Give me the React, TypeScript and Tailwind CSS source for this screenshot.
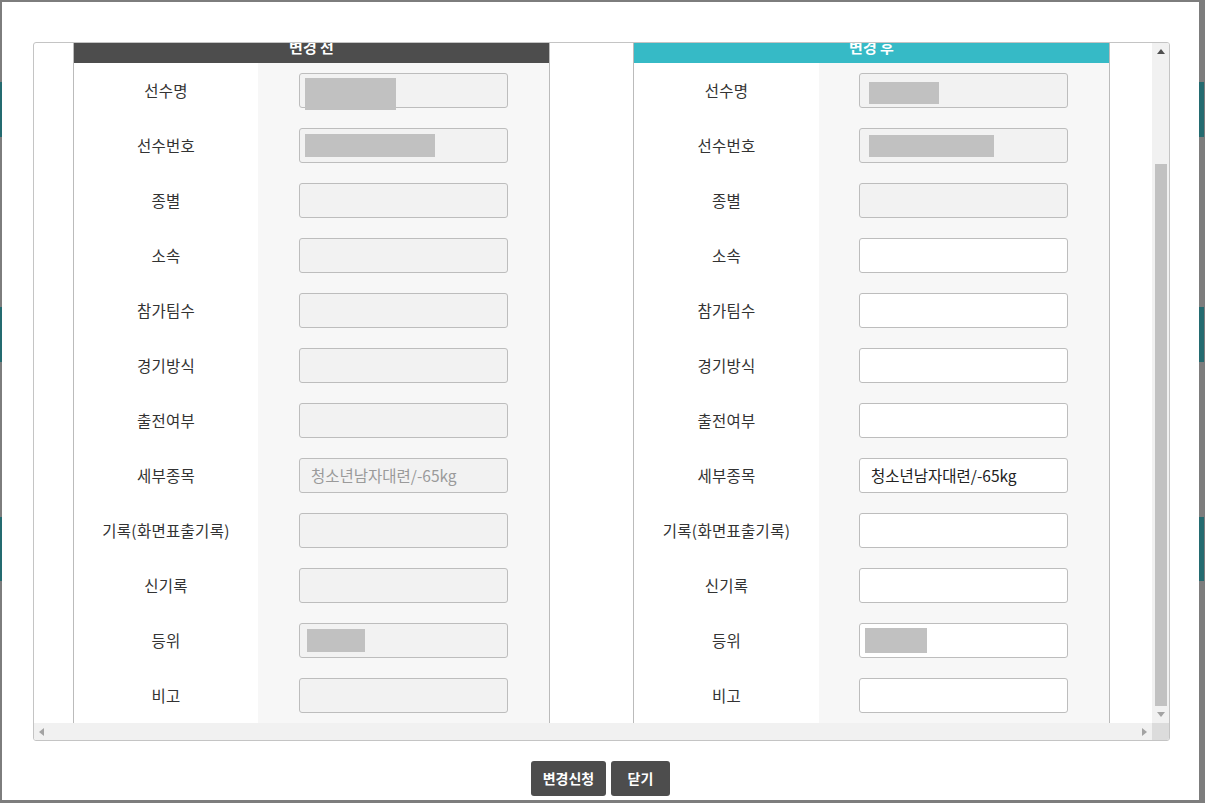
import React from 'react';

const rows = ['선수명', '선수번호', '종별', '소속', '참가팀수', '경기방식', '출전여부', '세부종목', '기록(화면표출기록)', '신기록', '등위', '비고'];

type Block = { x: number; y: number; w: number; h: number };

const leftBlocks: Record<number, Block> = {
  0: { x: 6, y: 5, w: 91, h: 32 },
  1: { x: 6, y: 6, w: 130, h: 23 },
  10: { x: 8, y: 6, w: 58, h: 23 },
};
const rightBlocks: Record<number, Block> = {
  0: { x: 10, y: 9, w: 70, h: 22 },
  1: { x: 10, y: 7, w: 125, h: 22 },
  10: { x: 6, y: 5, w: 62, h: 25 },
};

function Field({ disabled, block, text }: { disabled: boolean; block?: Block; text?: string }) {
  return (
    <div
      className={
        'relative w-[209px] h-[35px] border border-[#bdbdbd] rounded-[3px] flex items-center pl-[11px] text-[15.5px] ' +
        (disabled ? 'bg-[#f2f2f2] text-[#9a9a9a]' : 'bg-white text-[#222]')
      }
    >
      {text}
      {block && (
        <div
          className="absolute bg-[#c1c1c1]"
          style={{ left: block.x - 1, top: block.y - 1, width: block.w, height: block.h }}
        />
      )}
    </div>
  );
}

function Table({ side }: { side: 'left' | 'right' }) {
  const left = side === 'left';
  return (
    <div className="w-[477px] border-x border-[#bbbbbb] flex flex-col">
      <div
        className={
          'h-[40px] pt-[8px] flex items-center justify-center text-white font-bold text-[15px] ' +
          (left ? 'bg-[#4d4d4d]' : 'bg-[#36bac6]')
        }
      >
        {left ? '변경 전' : '변경 후'}
      </div>
      {rows.map((r, i) => (
        <div key={r} className="flex h-[55px]">
          <div className={(left ? 'w-[184px]' : 'w-[185px]') + ' bg-white flex items-center justify-center text-[15.5px] tracking-[0.3px] text-[#333]'}>
            {r}
          </div>
          <div className={(left ? 'pl-[41px]' : 'pl-[40px]') + ' flex-1 bg-[#f7f7f7] flex items-center'}>
            <Field
              disabled={left || i < 3}
              block={left ? leftBlocks[i] : rightBlocks[i]}
              text={i === 7 ? '청소년남자대련/-65kg' : undefined}
            />
          </div>
        </div>
      ))}
    </div>
  );
}

function Strips() {
  return (
    <div className="w-[5px] h-full flex flex-col">
      <div className="h-[82px]" />
      <div className="h-[55px] bg-[#246b70]" />
      <div className="h-[170px]" />
      <div className="h-[55px] bg-[#246b70]" />
      <div className="h-[155px]" />
      <div className="h-[64px] bg-[#246b70]" />
    </div>
  );
}

export default function App() {
  return (
    <div className="w-[1205px] h-[803px] bg-[#7d7d7d] relative overflow-hidden font-['Noto_Sans_CJK_KR','Noto_Sans',sans-serif]">
      <div className="absolute left-0 top-0 h-full w-[2px] overflow-hidden"><Strips /></div>
      <div className="absolute right-0 top-0 h-full w-[6px] overflow-hidden"><Strips /></div>
      <div className="absolute left-[2px] top-[2px] w-[1197px] h-[798px] bg-white flex flex-col">
        <div className="ml-[31px] mt-[40px] w-[1137px] h-[699px] border border-[#c4c4c4] rounded-[3px] flex flex-col overflow-hidden">
          <div className="flex h-[680px]">
            <div className="w-[1118px] h-[680px] overflow-hidden">
              <div className="flex mt-[-20px] pl-[39px] gap-[83px]">
                <Table side="left" />
                <Table side="right" />
              </div>
            </div>
            <div className="w-[17px] h-[680px] bg-[#f1f1f1] flex flex-col items-center">
              <div className="h-[17px] flex items-center justify-center">
                <svg width="8" height="5" viewBox="0 0 8 5"><path d="M0 5 L4 0 L8 5 Z" fill="#505050" /></svg>
              </div>
              <div className="h-[104px]" />
              <div className="w-[12px] h-[542px] bg-[#c1c1c1]" />
              <div className="flex-1 flex items-center justify-center">
                <svg width="8" height="5" viewBox="0 0 8 5"><path d="M0 0 L8 0 L4 5 Z" fill="#a3a3a3" /></svg>
              </div>
            </div>
          </div>
          <div className="flex h-[17px]">
            <div className="w-[1118px] bg-[#f1f1f1] flex items-center justify-between px-[5px]">
              <svg width="5" height="8" viewBox="0 0 5 8"><path d="M5 0 L0 4 L5 8 Z" fill="#a3a3a3" /></svg>
              <svg width="5" height="8" viewBox="0 0 5 8"><path d="M0 0 L5 4 L0 8 Z" fill="#a3a3a3" /></svg>
            </div>
            <div className="w-[17px] bg-[#dcdcdc]" />
          </div>
        </div>
        <div className="flex justify-center gap-[5px] mt-[20px]">
          <button className="w-[75px] h-[35px] bg-[#4d4d4d] rounded-[3px] text-white font-bold text-[14px]">변경신청</button>
          <button className="w-[59px] h-[35px] bg-[#4d4d4d] rounded-[3px] text-white font-bold text-[14px]">닫기</button>
        </div>
      </div>
    </div>
  );
}
